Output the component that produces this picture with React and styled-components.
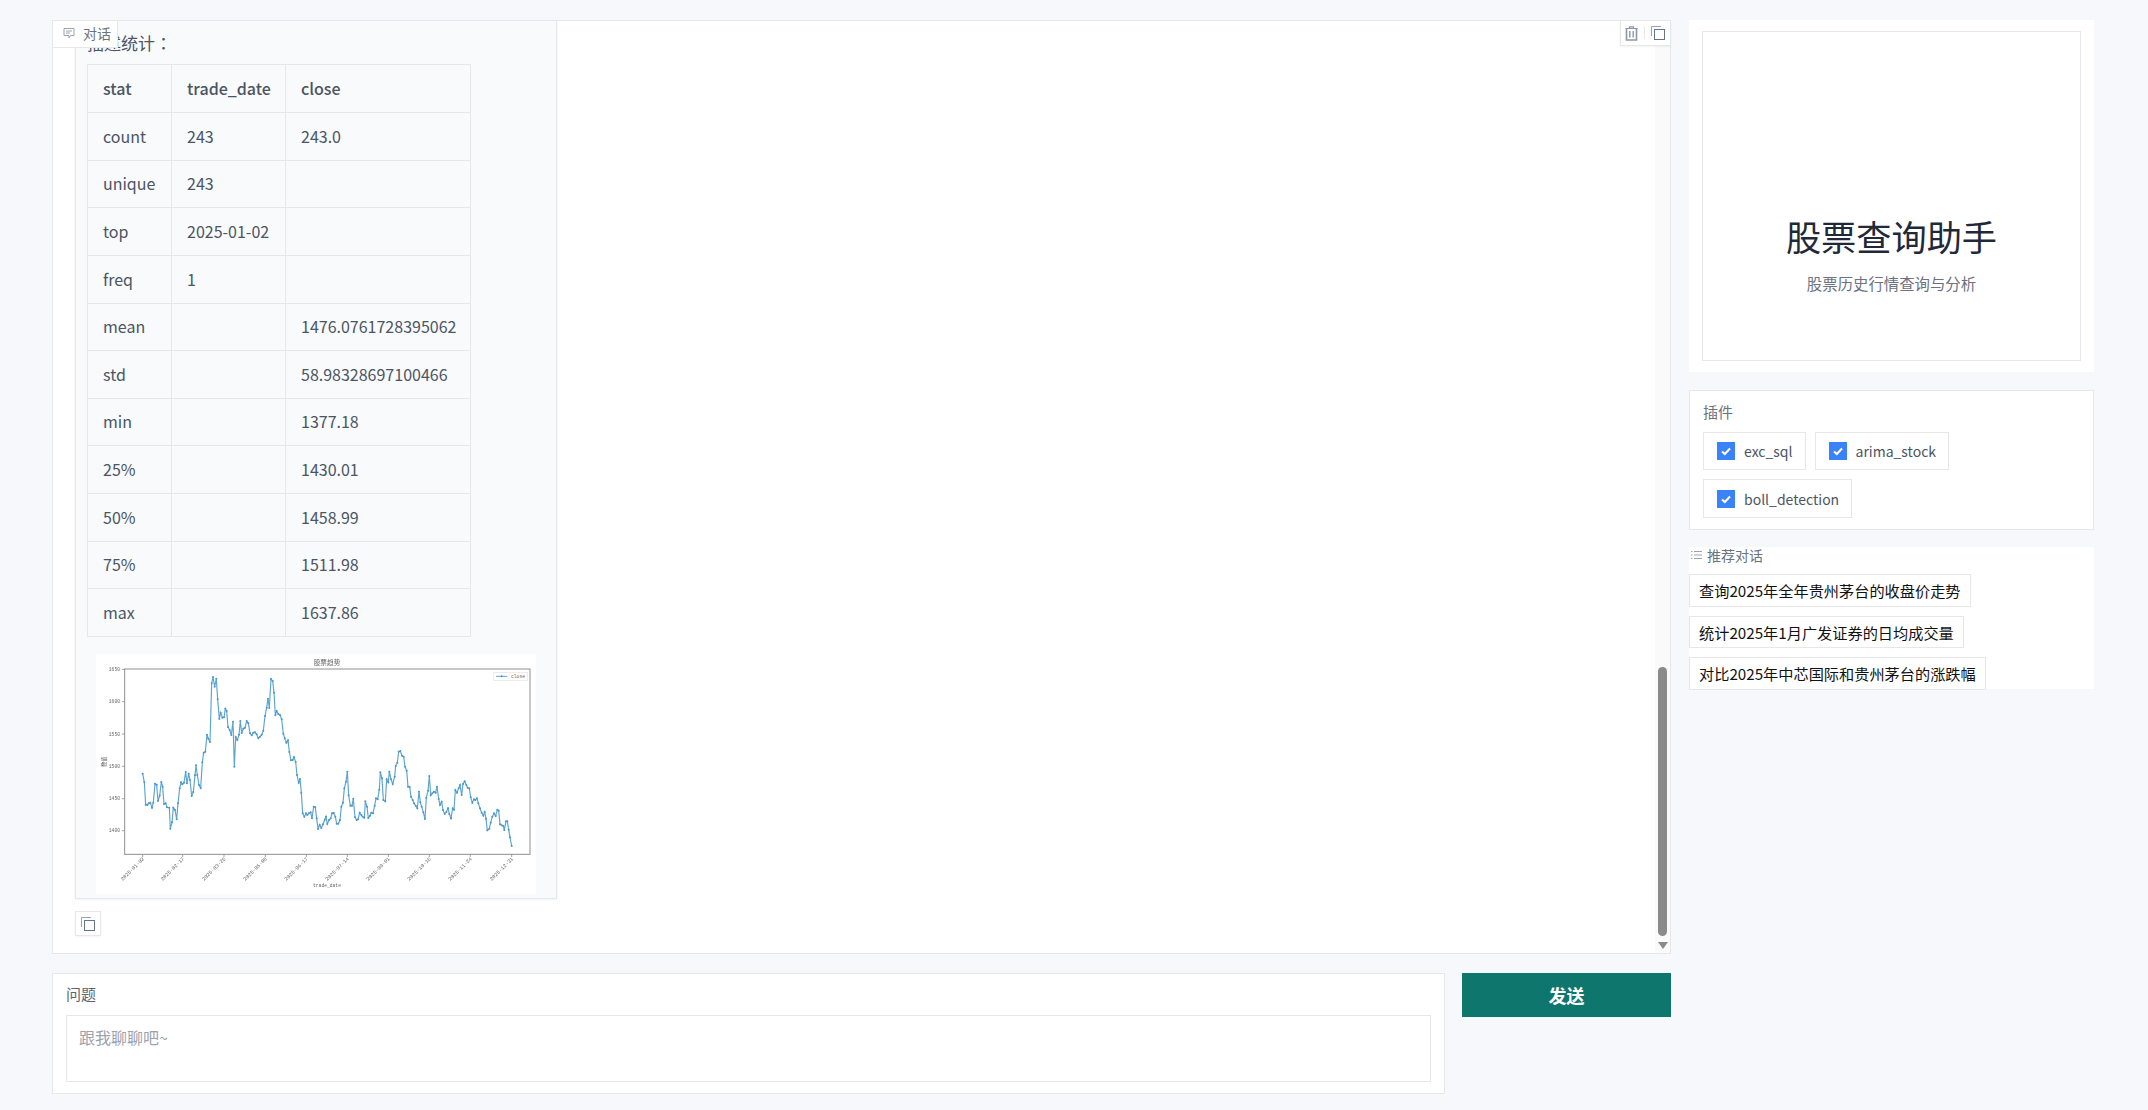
import React from "react";
import styled, { createGlobalStyle } from "styled-components";

const FONT = `"Noto Sans CJK SC", "Noto Sans", sans-serif`;

const GlobalStyle = createGlobalStyle`
    html, body {
        margin: 0;
        padding: 0;
        background: #f7f8fc;
        font-family: ${FONT};
    }
    * {
        box-sizing: border-box;
    }
`;

// page grid
const Page = styled.div`
    display: grid;
    grid-template-columns: 1619px 405px;
    column-gap: 18px;
    width: 2148px;
    height: 1110px;
    padding: 20px 54px 0 52px;
    overflow: hidden;
`;

const MainColumn = styled.main`
    display: flex;
    flex-direction: column;
    gap: 19px;
`;

const SideColumn = styled.aside`
    display: flex;
    flex-direction: column;
`;

// chat panel
const ChatPanel = styled.section`
    position: relative;
    display: flex;
    height: 934px;
    background: #fff;
    border: 1px solid #e5e7eb;
`;

const PanelLabel = styled.div`
    position: absolute;
    top: -1px;
    left: -1px;
    z-index: 2;
    display: flex;
    align-items: center;
    gap: 8px;
    width: 66px;
    height: 28px;
    padding: 0 0 2px 10px;
    background: #fff;
    border: 1px solid #e5e7eb;
    color: #6b7280;
    font-size: 14px;
`;

const PanelActions = styled.div`
    position: absolute;
    top: -1px;
    right: -1px;
    z-index: 2;
    display: flex;
    align-items: center;
    justify-content: center;
    gap: 6px;
    width: 51px;
    height: 26px;
    padding-right: 2px;
    background: #fff;
    border: 1px solid #e5e7eb;
    box-shadow: 0 1px 2px rgba(0, 0, 0, 0.05);
`;

const ActionDivider = styled.span`
    width: 1px;
    height: 12px;
    background: #e5e7eb;
`;

const MessageList = styled.div`
    flex: 1;
    display: flex;
    flex-direction: column;
    justify-content: flex-end;
    align-items: flex-start;
    padding: 0 0 17px 22px;
    overflow: hidden;
`;

const Bubble = styled.div`
    flex-shrink: 0;
    width: 482px;
    padding: 40px 11px 4px;
    background: #f9fafc;
    border: 1px solid #e5e7eb;
    box-shadow: 0 1px 2px rgba(0, 0, 0, 0.05);
    color: #374151;
`;

const BubbleText = styled.p`
    margin: 0 0 8px;
    font-family: "Noto Sans CJK TC", "Noto Sans CJK SC", sans-serif;
    font-size: 17px;
    line-height: 27px;
    color: #4b5563;
`;

const StatsTable = styled.table`
    border-collapse: collapse;
    width: 383px;
    margin-bottom: 17px;
    font-size: 16px;
    color: #4b5563;
    table-layout: fixed;
`;

const Row = styled.tr`
    height: ${({ $short }) => ($short ? "47px" : "48px")};
`;

const HeadCell = styled.th`
    padding: 0 15px 2px;
    border: 1px solid #e5e7eb;
    text-align: left;
    font-weight: 500;
`;

const Cell = styled.td`
    padding: 0 15px 2px;
    border: 1px solid #e5e7eb;
`;

const ChartFrame = styled.div`
    width: 440px;
    height: 240px;
    margin: 0 auto;
    background: #fff;
`;

const ChartSvg = styled.svg`
    display: block;
    width: 440px;
    height: 240px;
    filter: blur(0.5px);
`;

const CopyButton = styled.button`
    flex-shrink: 0;
    display: flex;
    align-items: center;
    justify-content: center;
    width: 26px;
    height: 25px;
    margin-top: 12px;
    padding: 0;
    background: #fff;
    border: 1px solid #e5e7eb;
    box-shadow: 0 1px 2px rgba(0, 0, 0, 0.05);
`;

const ScrollTrack = styled.div`
    flex-shrink: 0;
    display: flex;
    flex-direction: column;
    align-items: center;
    justify-content: flex-end;
    width: 15px;
    padding-bottom: 4px;
    background: #fafafa;
`;

const ScrollThumb = styled.div`
    width: 9px;
    height: 269px;
    margin-bottom: 6px;
    background: #8a8a8a;
    border-radius: 5px;
`;

const ScrollArrow = styled.div`
    width: 0;
    height: 0;
    border-left: 5px solid transparent;
    border-right: 5px solid transparent;
    border-top: 7px solid #8a8a8a;
`;

// question row
const InputRow = styled.div`
    display: flex;
    align-items: flex-start;
    gap: 17px;
`;

const QuestionBox = styled.div`
    width: 1393px;
    height: 121px;
    padding: 9px 13px 11px;
    background: #fff;
    border: 1px solid #e5e7eb;
`;

const FieldLabel = styled.div`
    height: 21px;
    margin-bottom: 11px;
    font-size: 15px;
    line-height: 21px;
    color: #5b6675;
`;

const QuestionInput = styled.textarea`
    display: block;
    width: 100%;
    height: 67px;
    padding: 9px 12px;
    background: #fff;
    border: 1px solid #e5e7eb;
    border-radius: 0;
    outline: none;
    resize: none;
    font-family: ${FONT};
    font-size: 16px;
    line-height: 24px;

    &::placeholder {
        color: #9ca3af;
        opacity: 1;
    }
`;

const SendButton = styled.button`
    width: 209px;
    height: 44px;
    padding: 0;
    background: #0f766e;
    border: none;
    color: #fff;
    font-family: ${FONT};
    font-size: 18px;
    font-weight: 700;
`;

// right side
const HeroCard = styled.div`
    height: 352px;
    padding: 11px 13px 11px;
    background: #fff;
`;

const HeroInner = styled.div`
    display: flex;
    flex-direction: column;
    align-items: center;
    height: 100%;
    padding-top: 182px;
    border: 1px solid #e5e7eb;
`;

const HeroTitle = styled.h1`
    margin: 0;
    font-size: 35.2px;
    line-height: 44px;
    font-weight: 400;
    color: #1f2937;
`;

const HeroSubtitle = styled.p`
    margin: 13px 0 0;
    font-size: 15.4px;
    line-height: 24px;
    color: #6b7280;
`;

const PluginCard = styled.div`
    height: 140px;
    margin-top: 18px;
    padding: 10px 13px;
    background: #fff;
    border: 1px solid #e5e7eb;
`;

const PluginTitle = styled.div`
    height: 21px;
    margin-bottom: 10px;
    font-size: 15px;
    line-height: 21px;
    color: #6b7280;
`;

const PluginList = styled.div`
    display: flex;
    flex-wrap: wrap;
    gap: 9px;
`;

const PluginChip = styled.label`
    display: flex;
    align-items: center;
    gap: 9px;
    height: ${({ $tall }) => ($tall ? "39px" : "38px")};
    padding: 0 12px 0 13px;
    border: 1px solid #e5e7eb;
    font-size: 14px;
    line-height: 20px;
    color: #4b5563;
`;

const CheckMark = styled.span`
    display: flex;
    align-items: center;
    justify-content: center;
    width: 18px;
    height: 18px;
    background: #3b82f6;
`;

const SuggestCard = styled.div`
    height: 142px;
    margin-top: 17px;
    background: #fff;
`;

const SuggestTitle = styled.div`
    display: flex;
    align-items: center;
    gap: 5px;
    height: 16px;
    padding-left: 2px;
    font-size: 14px;
    line-height: 16px;
    color: #6b7280;
`;

const SuggestList = styled.div`
    display: flex;
    flex-direction: column;
    align-items: flex-start;
    gap: 9px;
    margin-top: 11px;
`;

const SuggestButton = styled.button`
    height: 32.5px;
    padding: 0 9px;
    background: #fff;
    border: 1px solid #e5e7eb;
    color: #111;
    font-family: ${FONT};
    font-size: 15.2px;
    white-space: nowrap;
`;

const CommentIcon = () => (
    <svg width="12" height="12" viewBox="0 0 12 12" fill="none" stroke="#9ca3af" strokeWidth="1">
        <path d="M1 1.5h10v7H7.5L6 11V8.5H1z" />
        <path d="M3 4h6M3 6h4" />
    </svg>
);

const TrashIcon = () => (
    <svg width="13" height="15" viewBox="0 0 13 15" fill="none" stroke="#8b97a8" strokeWidth="1.2">
        <path d="M0.5 2.5h12M4.5 2.5V0.8h4v1.7" />
        <path d="M1.5 2.5v11.5h10V2.5" strokeWidth="1.6" />
        <path d="M4.8 5v6.5M8.2 5v6.5" strokeWidth="1.4" />
    </svg>
);

const CopyIcon = ({ color = "#64748b" }) => (
    <svg width="14" height="14" viewBox="0 0 14 14" fill="none">
        <path d="M0.5 10V0.5H10" stroke="#94a3b8" />
        <rect x="3.5" y="3.5" width="10" height="10" stroke={color} />
    </svg>
);

const CheckIcon = () => (
    <svg width="12" height="12" viewBox="0 0 12 12" fill="none" stroke="#fff" strokeWidth="2">
        <path d="M2 6.5l2.8 2.5L10 3.5" />
    </svg>
);

const ListIcon = () => (
    <svg width="11" height="10" viewBox="0 0 11 10" fill="none" stroke="#9ca3af" strokeWidth="1">
        <path d="M3 1.5h8M3 5h8M3 8.5h8M0 1.5h1.5M0 5h1.5M0 8.5h1.5" />
    </svg>
);

const tableRows = [
    ["count", "243", "243.0"],
    ["unique", "243", ""],
    ["top", "2025-01-02", ""],
    ["freq", "1", ""],
    ["mean", "", "1476.0761728395062"],
    ["std", "", "58.98328697100466"],
    ["min", "", "1377.18"],
    ["25%", "", "1430.01"],
    ["50%", "", "1458.99"],
    ["75%", "", "1511.98"],
    ["max", "", "1637.86"],
];

const shortRows = ["unique", "mean", "min", "75%"];

// close price, traced in the chart's own coordinates
const closeSeries = [
    [218, 401], [223, 427], [227, 494], [232, 495], [236, 490], [241, 488], [246, 503], [250, 488], [255, 431], [260, 434],
    [264, 483], [269, 467], [274, 426], [278, 440], [282, 492], [287, 490], [291, 502], [298, 503], [301, 566], [306, 547],
    [310, 503], [315, 510], [320, 538], [324, 490], [329, 445], [333, 427], [337, 433], [342, 428], [347, 396], [351, 430],
    [356, 401], [360, 420], [365, 468], [370, 456], [375, 406], [378, 376], [382, 405], [387, 435], [392, 444], [397, 367],
    [401, 338], [406, 335], [411, 284], [415, 296], [420, 306], [425, 130], [429, 111], [434, 140], [439, 116], [443, 178],
    [448, 237], [452, 218], [457, 233], [462, 232], [466, 206], [470, 213], [474, 261], [479, 270], [484, 285], [489, 245],
    [493, 380], [497, 291], [502, 300], [507, 284], [511, 243], [515, 279], [520, 266], [525, 263], [530, 243], [535, 250],
    [540, 280], [545, 286], [550, 278], [555, 277], [560, 283], [565, 295], [570, 290], [575, 284], [580, 272], [585, 228],
    [590, 203], [594, 176], [598, 204], [603, 117], [608, 123], [612, 158], [616, 226], [620, 213], [625, 222], [630, 225],
    [635, 238], [640, 281], [644, 295], [649, 308], [654, 301], [658, 336], [663, 361], [668, 360], [672, 351], [677, 366],
    [681, 405], [686, 428], [690, 417], [694, 458], [698, 520], [703, 530], [708, 520], [712, 525], [717, 520], [722, 517],
    [726, 535], [731, 500], [736, 502], [740, 535], [744, 567], [749, 554], [754, 564], [759, 553], [764, 540], [768, 530],
    [772, 552], [777, 540], [782, 535], [786, 520], [791, 519], [796, 530], [800, 551], [805, 551], [810, 540], [814, 500],
    [819, 488], [823, 445], [828, 425], [832, 395], [836, 466], [841, 497], [846, 497], [850, 476], [855, 532], [860, 540],
    [864, 538], [869, 518], [874, 525], [878, 530], [883, 533], [886, 484], [891, 500], [895, 534], [900, 527], [904, 518],
    [909, 520], [914, 497], [918, 475], [923, 478], [928, 449], [931, 397], [936, 415], [940, 480], [946, 484], [950, 418],
    [955, 427], [958, 395], [963, 418], [968, 432], [974, 410], [977, 378], [982, 368], [986, 335], [991, 333], [996, 347],
    [1001, 350], [1005, 380], [1010, 392], [1014, 440], [1019, 441], [1023, 470], [1028, 480], [1032, 490], [1037, 497], [1042, 505],
    [1047, 455], [1051, 487], [1055, 500], [1060, 517], [1065, 537], [1069, 473], [1074, 452], [1078, 408], [1082, 466], [1087, 460],
    [1092, 455], [1097, 458], [1101, 440], [1106, 477], [1110, 495], [1115, 485], [1119, 510], [1124, 522], [1129, 516], [1134, 505],
    [1138, 522], [1143, 535], [1148, 505], [1152, 509], [1156, 450], [1161, 458], [1166, 445], [1170, 435], [1175, 465], [1179, 432],
    [1184, 424], [1189, 435], [1193, 443], [1198, 445], [1202, 472], [1207, 488], [1212, 478], [1216, 480], [1221, 475], [1225, 490],
    [1230, 505], [1235, 518], [1240, 527], [1244, 516], [1248, 536], [1252, 571], [1258, 566], [1262, 548], [1267, 530], [1272, 520],
    [1277, 528], [1282, 509], [1286, 512], [1290, 553], [1295, 556], [1300, 558], [1303, 570], [1308, 544], [1312, 544], [1316, 569],
    [1320, 592], [1325, 618],
];

const yTicks = [
    ["1650", 88],
    ["1600", 185],
    ["1550", 282],
    ["1500", 379],
    ["1450", 476],
    ["1400", 572],
];

const xTicks = [
    ["2025-01-02", 218],
    ["2025-02-17", 338],
    ["2025-03-26", 462],
    ["2025-05-08", 586],
    ["2025-06-17", 709],
    ["2025-07-14", 832],
    ["2025-09-01", 955],
    ["2025-10-16", 1078],
    ["2025-11-24", 1201],
    ["2025-12-31", 1325],
];

const PriceChart = () => (
    <ChartSvg viewBox="78 42 1320 720" fontFamily="'Liberation Mono', monospace" fill="#666">
        <text x="771" y="76" fontSize="20" textAnchor="middle" fontFamily={FONT}>股票趋势</text>
        <rect x="164" y="87" width="1216" height="556" fill="#fff" stroke="#8f8f8f" strokeWidth="3" />
        {yTicks.map(([label, y]) => (
            <g key={label}>
                <path d={`M156 ${y}h8`} stroke="#777" strokeWidth="2" />
                <text x="150" y={y + 5} fontSize="14" textAnchor="end">{label}</text>
            </g>
        ))}
        {xTicks.map(([label, x]) => (
            <g key={label}>
                <path d={`M${x} 643v8`} stroke="#777" strokeWidth="2" />
                <text x={x} y="660" fontSize="15.5" textAnchor="end" transform={`rotate(-45 ${x} 652)`}>{label}</text>
            </g>
        ))}
        <text x="771" y="741" fontSize="14" textAnchor="middle">trade_date</text>
        <text x="0" y="0" fontSize="16" textAnchor="middle" fontFamily={FONT} transform="translate(109 365) rotate(-90)">数值</text>
        <polyline points={closeSeries.map((p) => p.join(",")).join(" ")} fill="none" stroke="#5ea4d2" strokeWidth="3.5" />
        {closeSeries.map(([x, y]) => (
            <circle key={x} cx={x} cy={y} r="3" fill="#4a97ca" />
        ))}
        <rect x="1271" y="97" width="101" height="25" fill="#fff" stroke="#e3e3e3" strokeWidth="2" />
        <path d="M1278 109h34" stroke="#5ea4d2" strokeWidth="3" />
        <circle cx="1295" cy="109" r="3" fill="#4a97ca" />
        <text x="1323" y="114" fontSize="14">close</text>
    </ChartSvg>
);

const plugins = ["exc_sql", "arima_stock", "boll_detection"];

const suggestions = [
    "查询2025年全年贵州茅台的收盘价走势",
    "统计2025年1月广发证券的日均成交量",
    "对比2025年中芯国际和贵州茅台的涨跌幅",
];

export default function App() {
    return (
        <Page>
            <GlobalStyle />
            <MainColumn>
                <ChatPanel>
                    <PanelLabel>
                        <CommentIcon />
                        对话
                    </PanelLabel>
                    <PanelActions>
                        <TrashIcon />
                        <ActionDivider />
                        <CopyIcon />
                    </PanelActions>
                    <MessageList>
                        <Bubble>
                            <BubbleText>描述统计：</BubbleText>
                            <StatsTable>
                                <colgroup>
                                    <col width="84" />
                                    <col width="114" />
                                    <col width="185" />
                                </colgroup>
                                <thead>
                                    <Row>
                                        <HeadCell>stat</HeadCell>
                                        <HeadCell>trade_date</HeadCell>
                                        <HeadCell>close</HeadCell>
                                    </Row>
                                </thead>
                                <tbody>
                                    {tableRows.map((row) => (
                                        <Row key={row[0]} $short={shortRows.includes(row[0])}>
                                            <Cell>{row[0]}</Cell>
                                            <Cell>{row[1]}</Cell>
                                            <Cell>{row[2]}</Cell>
                                        </Row>
                                    ))}
                                </tbody>
                            </StatsTable>
                            <ChartFrame>
                                <PriceChart />
                            </ChartFrame>
                        </Bubble>
                        <CopyButton>
                            <CopyIcon />
                        </CopyButton>
                    </MessageList>
                    <ScrollTrack>
                        <ScrollThumb />
                        <ScrollArrow />
                    </ScrollTrack>
                </ChatPanel>
                <InputRow>
                    <QuestionBox>
                        <FieldLabel>问题</FieldLabel>
                        <QuestionInput placeholder="跟我聊聊吧~" />
                    </QuestionBox>
                    <SendButton>发送</SendButton>
                </InputRow>
            </MainColumn>
            <SideColumn>
                <HeroCard>
                    <HeroInner>
                        <HeroTitle>股票查询助手</HeroTitle>
                        <HeroSubtitle>股票历史行情查询与分析</HeroSubtitle>
                    </HeroInner>
                </HeroCard>
                <PluginCard>
                    <PluginTitle>插件</PluginTitle>
                    <PluginList>
                        {plugins.map((name, i) => (
                            <PluginChip key={name} $tall={i === 2}>
                                <CheckMark>
                                    <CheckIcon />
                                </CheckMark>
                                {name}
                            </PluginChip>
                        ))}
                    </PluginList>
                </PluginCard>
                <SuggestCard>
                    <SuggestTitle>
                        <ListIcon />
                        推荐对话
                    </SuggestTitle>
                    <SuggestList>
                        {suggestions.map((text) => (
                            <SuggestButton key={text}>{text}</SuggestButton>
                        ))}
                    </SuggestList>
                </SuggestCard>
            </SideColumn>
        </Page>
    );
}
